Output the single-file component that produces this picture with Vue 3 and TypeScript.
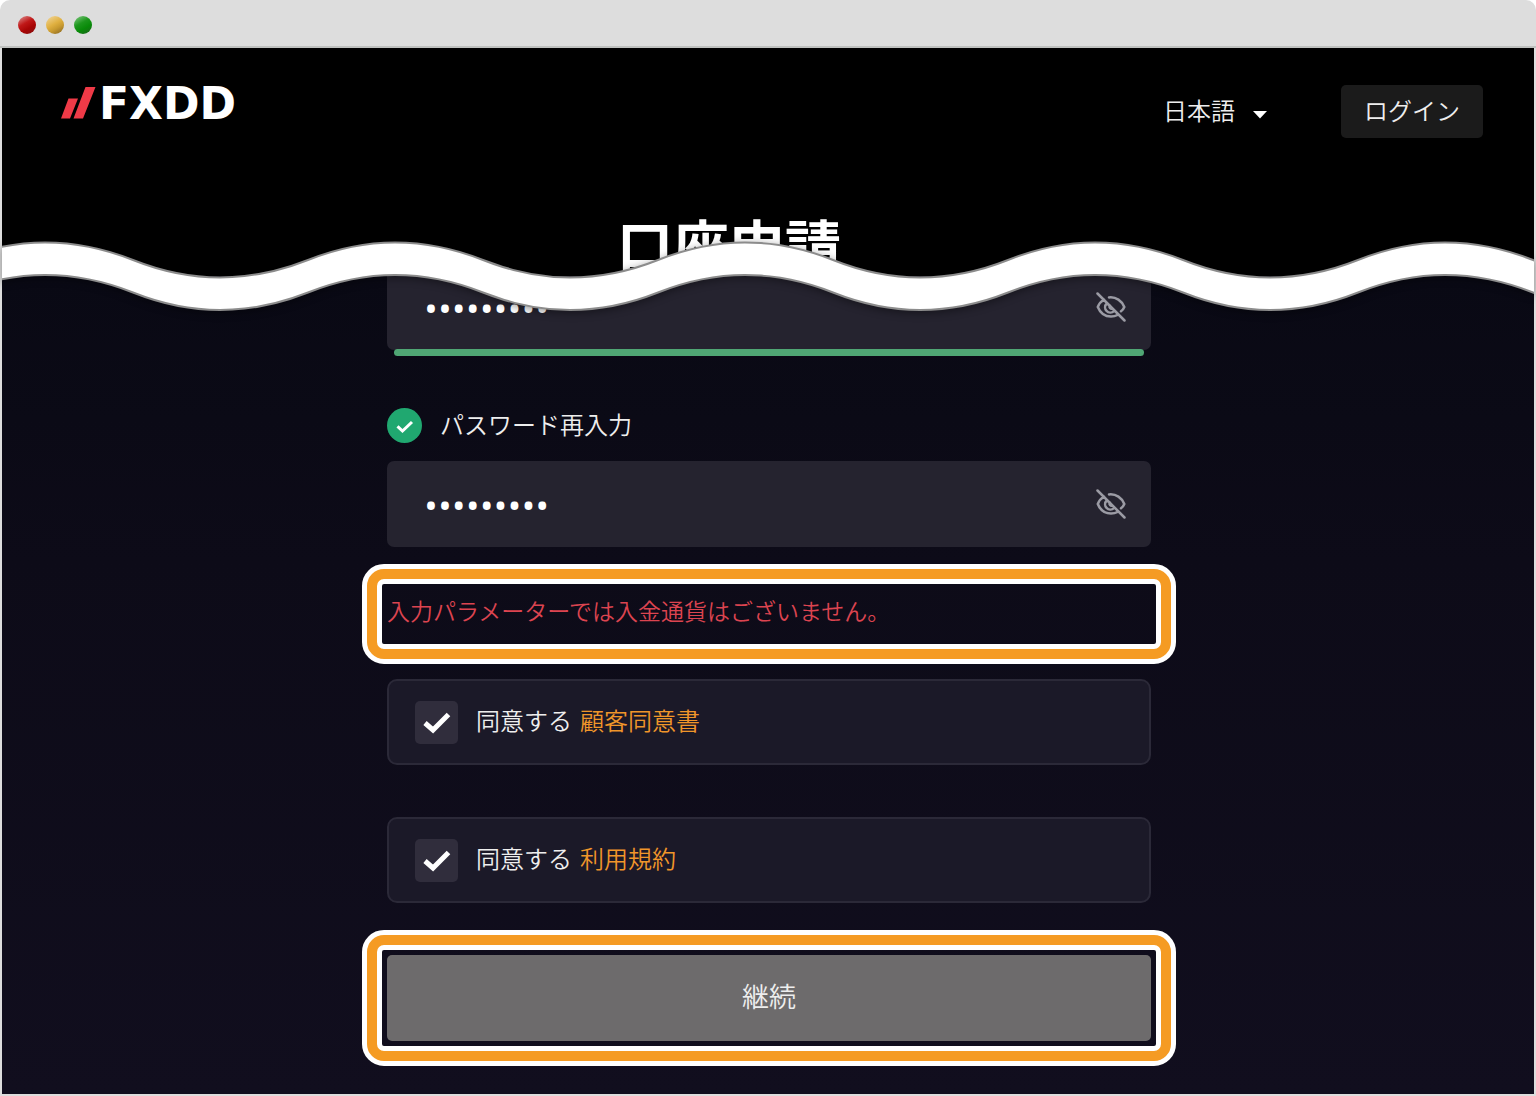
<script setup lang="ts">
import { ref } from 'vue'

interface Agreement {
  id: string
  title: string
}

const password = ref('a1b2c3d4e')
const passwordAgain = ref('a1b2c3d4e')
const language = ref('ja')
const accepted = ref<string[]>(['client', 'terms'])
const agreements: Agreement[] = [
  { id: 'client', title: '顧客同意書' },
  { id: 'terms', title: '利用規約' },
]
</script>

<template>
  <div class="window">
    <div class="titlebar">
      <span class="light light-red"></span>
      <span class="light light-yellow"></span>
      <span class="light light-green"></span>
    </div>

    <div class="page">
      <div class="hero">
        <header class="header">
          <a class="logo" href="#" aria-label="FXDD">
            <svg width="178" height="34" viewBox="0 0 178 34" aria-hidden="true">
              <path d="M7.500 13.500H17L9 33.500H0Z M24.500 2H34.500L22 33.500H12.500Z" fill="#ef3a47" />
              <text x="38" y="34" class="logo-text">FXDD</text>
            </svg>
          </a>
          <div class="language">
            <select v-model="language" aria-label="言語">
              <option value="ja">日本語</option>
            </select>
            <svg class="caret" width="14" height="8" viewBox="0 0 14 8" aria-hidden="true">
              <path d="M0 0H14L7 7.500Z" fill="#fff" />
            </svg>
          </div>
          <button class="login" type="button">ログイン</button>
        </header>
        <h1>口座申請</h1>
      </div>

      <svg class="wave" viewBox="0 0 1532 90" preserveAspectRatio="none" aria-hidden="true">
        <path
          class="band"
          d="M-132 49.500Q-88 49.500 -44 32T43 14.500Q87 14.500 131 32T218 49.500Q262 49.500 306 32T393 14.500Q437 14.500 481 32T568 49.500Q612 49.500 656 32T743 14.500Q787 14.500 831 32T918 49.500Q962 49.500 1006 32T1093 14.500Q1137 14.500 1181 32T1268 49.500Q1312 49.500 1356 32T1443 14.500Q1487 14.500 1531 32T1618 49.500V82Q1575 82 1531 64.500T1443 47Q1400 47 1356 64.500T1268 82Q1225 82 1181 64.500T1093 47Q1050 47 1006 64.500T918 82Q875 82 831 64.500T743 47Q700 47 656 64.500T568 82Q525 82 481 64.500T393 47Q350 47 306 64.500T218 82Q175 82 131 64.500T43 47Q0 47 -44 64.500T-132 82Z"
        />
      </svg>

      <main class="body">
        <form class="form" @submit.prevent>
          <div class="field">
            <input v-model="password" type="password" aria-label="パスワード" />
            <button class="eye" type="button" aria-label="パスワードを表示">
              <svg width="30" height="30" viewBox="0 0 30 30" aria-hidden="true">
                <path d="M1.500 1.500L28.500 28.500M8 7.500C4.800 9.500 2.800 12.200 1.800 15C4.200 21 9 24.500 15 24.500C17.500 24.500 19.700 24 21.500 23M13 5.400C20 4.600 26 9 28.300 15C27.600 16.800 26.500 18.200 25 19.300M10.800 11.500A5.200 5.200 0 0 0 18 19.200M14 13.500A2 2 0 0 0 16.500 16.500" />
              </svg>
            </button>
          </div>
          <div class="strength"></div>

          <div class="label-row">
            <svg width="35" height="35" viewBox="0 0 35 35" aria-hidden="true">
              <circle cx="17.500" cy="17.500" r="17.500" fill="#20a870" />
              <path d="M10.500 18.300L15.500 23L25 14" fill="none" stroke="#fff" stroke-width="3" />
            </svg>
            <label for="password-again">パスワード再入力</label>
          </div>
          <div class="field">
            <input id="password-again" v-model="passwordAgain" type="password" />
            <button class="eye" type="button" aria-label="パスワードを表示">
              <svg width="30" height="30" viewBox="0 0 30 30" aria-hidden="true">
                <path d="M1.500 1.500L28.500 28.500M8 7.500C4.800 9.500 2.800 12.200 1.800 15C4.200 21 9 24.500 15 24.500C17.500 24.500 19.700 24 21.500 23M13 5.400C20 4.600 26 9 28.300 15C27.600 16.800 26.500 18.200 25 19.300M10.800 11.500A5.200 5.200 0 0 0 18 19.200M14 13.500A2 2 0 0 0 16.500 16.500" />
              </svg>
            </button>
          </div>

          <div class="callout callout-error">
            <p class="error" role="alert">入力パラメーターでは入金通貨はございません。</p>
          </div>

          <div class="agreements">
            <div v-for="item in agreements" :key="item.id" class="agreement">
              <input :id="item.id" v-model="accepted" type="checkbox" :value="item.id" />
              <svg class="tick" width="43" height="43" viewBox="0 0 43 43" aria-hidden="true">
                <path d="M10 22L18 29L33.500 13.500" />
              </svg>
              <label :for="item.id">同意する</label>
              <a href="#">{{ item.title }}</a>
            </div>
          </div>

          <div class="callout">
            <button class="submit" type="submit">継続</button>
          </div>
        </form>
      </main>
    </div>
  </div>
</template>

<style>
body {
  margin: 0;
  background: #fff;
}
</style>

<style scoped>
* {
  box-sizing: border-box;
}

.window {
  border-radius: 10px 10px 0 0;
  background: #ddd;
  padding: 0 2px 2px;
  overflow: hidden;
  font-family: "Noto Sans CJK JP", sans-serif;
  font-size: 24px;
  font-weight: 350;
  line-height: 36px;
  color: #eee;
}

.titlebar {
  display: flex;
  align-items: center;
  gap: 10px;
  height: 48px;
  margin: 0 -2px;
  padding: 4px 18px 0;
  border-bottom: 2px solid #bfc1bf;
}

.light {
  width: 18px;
  height: 18px;
  border-radius: 50%;
}

.light-red {
  background: linear-gradient(150deg, #d99 0%, #c01818 40%, #a80505 65%, #801010 100%);
}

.light-yellow {
  background: linear-gradient(150deg, #f2d8a0 0%, #e0b040 45%, #c89a30 65%, #806020 100%);
}

.light-green {
  background: linear-gradient(150deg, #8c8 0%, #1c961c 40%, #088a08 65%, #206020 100%);
}

.page {
  position: relative;
}

.hero {
  height: 228px;
  background: #000;
}

.header {
  display: flex;
  align-items: flex-start;
  padding: 37px 51px 0 59px;
}

.logo {
  display: block;
  height: 34px;
  margin-right: auto;
}

.logo svg {
  display: block;
  overflow: visible;
}

.logo-text {
  font-family: "DejaVu Sans", sans-serif;
  font-size: 44px;
  font-weight: 700;
  fill: #fff;
}

.language {
  display: flex;
  align-items: center;
  height: 53px;
  margin-right: 74px;
}

.language select {
  appearance: none;
  width: 104px;
  margin-right: -14px;
  padding: 0 0 4px;
  border: 0;
  background: transparent;
  color: #eee;
  font: inherit;
}

.caret {
  margin-top: 6px;
  pointer-events: none;
}

.login {
  width: 142px;
  height: 53px;
  padding: 0 0 4px;
  border: 0;
  border-radius: 5px;
  background: #1b1b1b;
  color: #eee;
  font: inherit;
}

h1 {
  margin: 73px 78px 0 0;
  font-size: 56px;
  line-height: 64px;
  font-weight: 700;
  text-align: center;
  color: #fff;
}

.wave {
  position: absolute;
  top: 180px;
  left: 0;
  z-index: 1;
  width: 100%;
  height: 90px;
  pointer-events: none;
  filter: drop-shadow(0 2px 4px rgba(0, 0, 0, 0.4));
}

.band {
  fill: #fff;
  stroke: #8c8c8c;
  stroke-width: 2;
}

.body {
  overflow: hidden;
  padding: 0 0 28px 2px;
  background: linear-gradient(#090914, #0d0b18 35%, #110e1e);
}

.form {
  max-width: 764px;
  margin: -12px auto 0;
}

.field {
  display: flex;
  align-items: center;
  height: 86px;
  padding: 0 25px 0 37px;
  border-radius: 7px;
  background: #25232f;
}

.field input {
  flex: 1;
  min-width: 0;
  padding: 0;
  border: 0;
  outline: 0;
  background: transparent;
  color: #fff;
  font-family: "Open Sans", sans-serif;
  font-size: 37px;
  font-weight: 400;
}

.eye {
  width: 30px;
  height: 30px;
  padding: 0;
  border: 0;
  background: transparent;
}

.eye svg {
  display: block;
  fill: none;
  stroke: #9b9ba4;
  stroke-width: 2.5;
  stroke-linecap: round;
}

.strength {
  height: 7px;
  margin: -1px 7px 52px;
  border-radius: 4px;
  background: #4fa674;
}

.label-row {
  display: flex;
  align-items: center;
  gap: 18px;
  height: 35px;
  margin-bottom: 18px;
}

.label-row label,
.agreement label,
.agreement a {
  padding-bottom: 4px;
}

.callout {
  position: relative;
  margin: 0 -25px;
  padding: 25px;
}

.callout::before,
.callout::after {
  content: "";
  position: absolute;
  pointer-events: none;
}

.callout::before {
  inset: 0;
  border: 20px solid #fff;
  border-radius: 22px;
}

.callout::after {
  inset: 5px;
  border: 10px solid #f59b23;
  border-radius: 17px;
}

.callout-error {
  margin-top: 17px;
  margin-bottom: 15px;
}

.error {
  margin: 0;
  padding: 3px 0 11px;
  color: #dc4450;
  font-size: 23px;
}

.agreements {
  display: flex;
  flex-direction: column;
  gap: 52px;
  margin-bottom: 27px;
}

.agreement {
  display: flex;
  align-items: center;
  height: 86px;
  padding: 0 26px;
  border: 2px solid #2b2938;
  border-radius: 10px;
  background: #1b1928;
}

.agreement input {
  appearance: none;
  width: 43px;
  height: 43px;
  margin: 0;
  border-radius: 5px;
  background: #302d3c;
}

.tick {
  visibility: hidden;
  margin: 0 18px 0 -43px;
  fill: none;
  stroke: #fff;
  stroke-width: 5;
  pointer-events: none;
}

.agreement input:checked + .tick {
  visibility: visible;
}

.agreement a {
  margin-left: 8px;
  color: #f0962a;
  text-decoration: none;
}

.submit {
  display: block;
  width: 100%;
  height: 86px;
  padding: 0 0 4px;
  border: 0;
  border-radius: 5px;
  background: #6d6b6c;
  color: #eee;
  font: inherit;
  font-size: 27px;
}
</style>
